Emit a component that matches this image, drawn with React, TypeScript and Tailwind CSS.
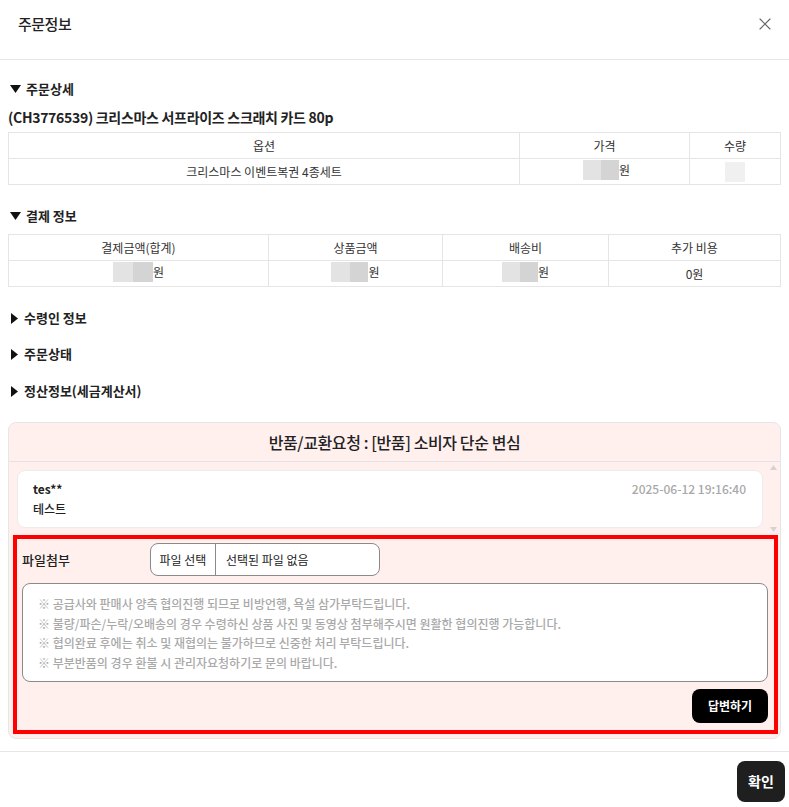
import { X } from "lucide-react";

function Caret({ open }: { open: boolean }) {
  return open ? (
    <svg width="11" height="8" viewBox="0 0 11 8" className="shrink-0">
      <path d="M0 0 H11 L5.5 8 Z" fill="#111" />
    </svg>
  ) : (
    <svg width="7" height="11" viewBox="0 0 7 11" className="shrink-0">
      <path d="M0 0 L7 5.5 L0 11 Z" fill="#111" />
    </svg>
  );
}

function SectionTitle({ label, open }: { label: string; open: boolean }) {
  return (
    <div className={`flex items-center h-[20px] text-[13px] font-semibold text-[#222] ${open ? "gap-[5px] pl-[2px]" : "gap-[6px] pl-[3px]"}`}>
      <Caret open={open} />
      <span>{label}</span>
    </div>
  );
}

// blurred amount placeholder
function Masked({ w = 36 }: { w?: number }) {
  return (
    <span className="inline-flex items-center">
      <span className="inline-flex h-[20px]" style={{ width: w }}>
        <span className="flex-1 bg-[#e3e3e3]" />
        <span className="flex-1 bg-[#d4d4d4]" />
      </span>
      <span>원</span>
    </span>
  );
}

export default function App() {
  const notice =
    "※ 공급사와 판매사 양측 협의진행 되므로 비방언행, 욕설 삼가부탁드립니다.\n※ 불량/파손/누락/오배송의 경우 수령하신 상품 사진 및 동영상 첨부해주시면 원활한 협의진행 가능합니다.\n※ 협의완료 후에는 취소 및 재협의는 불가하므로 신중한 처리 부탁드립니다.\n※ 부분반품의 경우 환불 시 관리자요청하기로 문의 바랍니다.";

  return (
    <div className="w-[789px] h-[807px] bg-white flex flex-col text-[#222] font-['Noto_Sans_CJK_KR',sans-serif]">
      {/* header */}
      <div className="h-[60px] shrink-0 flex items-start justify-between pl-[18px] pr-[14px] pt-[14px] border-b border-[#e6e6e6]">
        <span className="text-[15px] leading-[20px] font-medium tracking-[-0.5px]">주문정보</span>
        <X size={20} strokeWidth={1.4} className="text-[#666]" />
      </div>

      {/* body */}
      <div className="flex-1 flex flex-col px-[8px] pt-[19px]">
        <SectionTitle label="주문상세" open />
        <div className="mt-[8px] h-[20px] leading-[20px] text-[14px] font-bold tracking-[-0.3px]">
          (CH3776539) 크리스마스 서프라이즈 스크래치 카드 80p
        </div>

        <table className="mt-[5px] w-full border-collapse text-[12px] text-[#333] [&_td]:border [&_td]:border-[#e5e5e5] [&_td]:h-[26px] [&_td]:p-0 [&_td]:text-center">
          <tbody>
            <tr>
              <td className="w-[511px]">옵션</td>
              <td className="w-[170px]">가격</td>
              <td>수량</td>
            </tr>
            <tr>
              <td>크리스마스 이벤트복권 4종세트</td>
              <td>
                <span className="inline-flex pl-[4px]"><Masked w={36} /></span>
              </td>
              <td>
                <span className="inline-block w-[20px] h-[20px] bg-[#f0f0f0] align-middle" />
              </td>
            </tr>
          </tbody>
        </table>

        <div className="mt-[21px]">
          <SectionTitle label="결제 정보" open />
        </div>

        <table className="mt-[8px] w-full border-collapse text-[12px] text-[#333] [&_td]:border [&_td]:border-[#e5e5e5] [&_td]:h-[26px] [&_td]:p-0 [&_td]:text-center">
          <tbody>
            <tr>
              <td className="w-[260px]">결제금액(합계)</td>
              <td className="w-[174px]">상품금액</td>
              <td className="w-[166px]">배송비</td>
              <td>추가 비용</td>
            </tr>
            <tr>
              <td><Masked w={40} /></td>
              <td><Masked w={37} /></td>
              <td><Masked w={36} /></td>
              <td>0원</td>
            </tr>
          </tbody>
        </table>

        <div className="mt-[21px] flex flex-col gap-[16px]">
          <SectionTitle label="수령인 정보" open={false} />
          <div className="flex flex-col gap-[17px]">
            <SectionTitle label="주문상태" open={false} />
            <SectionTitle label="정산정보(세금계산서)" open={false} />
          </div>
        </div>

        {/* return / exchange request box */}
        <div className="mt-[21px] h-[317px] rounded-[8px] border border-[#e6e6e6] bg-[#fff0ee] flex flex-col">
          <div className="h-[39px] shrink-0 flex items-center justify-center text-[16px] font-medium tracking-[-0.4px] border-b border-[#e2e2e6]">
            반품/교환요청 : [반품] 소비자 단순 변심
          </div>

          <div className="h-[73px] shrink-0 flex pl-[8px]">
            <div className="flex-1 pt-[8px] pr-[4px]">
              <div className="h-[58px] rounded-[8px] bg-white border border-[#ececec] pl-[15px] pr-[16px] pt-[9px] text-[12px]">
                <div className="flex justify-between h-[18px] items-center">
                  <span className="font-bold">tes**</span>
                  <span className="text-[#a8a8a8] font-medium">2025-06-12 19:16:40</span>
                </div>
                <div className="mt-[2px] leading-[18px] font-medium">테스트</div>
              </div>
            </div>
            <div className="w-[12px] mr-[1px] flex flex-col items-center justify-between py-[3px]">
              <svg width="7" height="5" viewBox="0 0 7 5"><path d="M3.5 0 L7 5 H0 Z" fill="#d4d4d4" /></svg>
              <svg width="7" height="5" viewBox="0 0 7 5"><path d="M0 0 H7 L3.5 5 Z" fill="#d4d4d4" /></svg>
            </div>
          </div>

          <div className="ml-[4px] mr-[2px] h-[199px] border-[4px] border-[#ff0000] flex flex-col pt-[4px] pl-[5px] pr-[6px]">
            <div className="flex items-center h-[33px]">
              <span className="w-[128px] text-[13px] font-medium">파일첨부</span>
              <div className="w-[230px] h-[33px] rounded-[8px] border border-[#8a8a8a] bg-white flex text-[12px]">
                <span className="w-[65px] border-r border-[#8a8a8a] flex items-center justify-center">파일 선택</span>
                <span className="pl-[10px] flex items-center">선택된 파일 없음</span>
              </div>
            </div>
            <textarea
              className="mt-[7px] h-[99px] w-full resize-none rounded-[8px] border border-[#8a8a8a] bg-white px-[15px] pt-[10px] text-[12px] leading-[19.6px] font-medium outline-none placeholder:text-[#a9a9a9]"
              placeholder={notice}
            />
            <div className="mt-[7px] flex justify-end">
              <button className="w-[76px] h-[34px] rounded-[8px] bg-black text-white text-[12px] font-bold">
                답변하기
              </button>
            </div>
          </div>
        </div>
      </div>

      {/* footer */}
      <div className="h-[56px] shrink-0 border-t border-[#e6e6e6] flex justify-end items-start pt-[9px] pr-[4px]">
        <button className="w-[48px] h-[41px] rounded-[8px] bg-[#1f1f1f] text-white text-[14px] font-bold">확인</button>
      </div>
    </div>
  );
}
